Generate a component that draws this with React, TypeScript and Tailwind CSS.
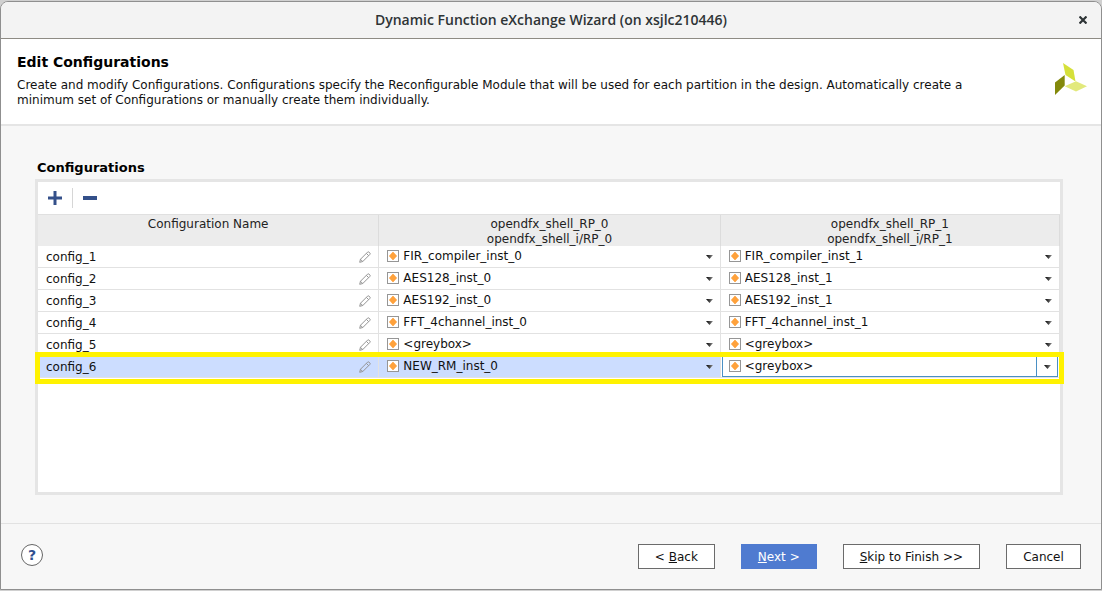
import { useState } from "react";

type Row = { name: string; modules: [string, string] };

const rows: Row[] = [
  { name: "config_1", modules: ["FIR_compiler_inst_0", "FIR_compiler_inst_1"] },
  { name: "config_2", modules: ["AES128_inst_0", "AES128_inst_1"] },
  { name: "config_3", modules: ["AES192_inst_0", "AES192_inst_1"] },
  { name: "config_4", modules: ["FFT_4channel_inst_0", "FFT_4channel_inst_1"] },
  { name: "config_5", modules: ["<greybox>", "<greybox>"] },
  { name: "config_6", modules: ["NEW_RM_inst_0", "<greybox>"] },
];

function Logo() {
  return (
    <svg width="32" height="32" viewBox="0 0 32 32" aria-hidden="true">
      <path d="M8 0 18.500 7 20.500 18.500 10.500 12Z" fill="#d5e03a" />
      <path d="M0 19.500 9.700 12V22.500L0 32Z" fill="#83890b" />
      <path d="M9.700 23.300 21 18.300 32 23.300 21 28.500Z" fill="#e2e97c" />
    </svg>
  );
}

function ModuleIcon() {
  return (
    <svg className="mb-px shrink-0" width="12" height="12" viewBox="0 0 12 12" aria-hidden="true">
      <rect x="0.5" y="0.5" width="11" height="11" fill="#fff" stroke="#969696" />
      <path d="M6 2 9.700 6 6 10 2.300 6Z" fill="#ffa23c" stroke="#ff9a30" strokeWidth="0.6" />
    </svg>
  );
}

function Pencil() {
  return (
    <svg width="12" height="12" viewBox="0 0 12 12" fill="none" stroke="#949494" aria-hidden="true">
      <path d="M0.700 11.300 1.500 8.200 8.600 1.100Q9.300 0.500 10 1.100L10.900 2Q11.500 2.700 10.900 3.400L3.800 10.500ZM7.400 2.400 9.600 4.600M1.500 8.300 3.700 10.500" />
    </svg>
  );
}

function Arrow() {
  return (
    <svg className="pointer-events-none" width="7" height="4" viewBox="0 0 7 4" aria-hidden="true">
      <defs>
        <linearGradient id="arrow">
          <stop offset="0" stopColor="#000" />
          <stop offset="1" stopColor="#8c8c8c" />
        </linearGradient>
      </defs>
      <path d="M0 0H7L3.500 4Z" fill="url(#arrow)" />
    </svg>
  );
}

function ModuleSelect({ value, label, editing }: { value: string; label: string; editing: boolean }) {
  return (
    <div
      className={
        editing
          ? "ml-px mr-px h-[21px] border border-[#4a90c4] bg-white pl-[6px] flex items-center"
          : "h-[21px] pl-2 flex items-center"
      }
    >
      <ModuleIcon />
      <select
        aria-label={label}
        defaultValue={value}
        className="h-full min-w-0 flex-1 appearance-none bg-transparent pl-[4px] outline-none"
      >
        <option>{value}</option>
      </select>
      <span
        className={
          editing
            ? "flex h-full w-[21px] items-center justify-center border-l border-[#4a90c4]"
            : "flex h-full w-[21px] items-center justify-center"
        }
      >
        <Arrow />
      </span>
    </div>
  );
}

export default function App() {
  const [selected, setSelected] = useState("config_6");
  const button = "h-[25px] min-w-[75px] border px-4 pt-[2px] leading-[15px]";
  const head = "border-r border-[#dcdcdc] p-0 align-top font-normal text-[#222]";

  return (
    <div className="min-h-screen bg-[#d0d0d0] pt-px pb-px font-['DejaVu_Sans',sans-serif] text-[12px] leading-[15px] text-[#111] flex flex-col">
      <main className="flex flex-1 flex-col overflow-hidden rounded-t-lg border border-[#8f8f8f] bg-[#f7f7f7]">
        <header className="relative flex h-[37px] items-center justify-center border-b border-[#8e8b84] bg-[#f3f3f3]">
          <h1 className="font-['Open_Sans',sans-serif] text-[14px] font-semibold leading-5 text-[#2e3436]">
            Dynamic Function eXchange Wizard (on xsjlc210446)
          </h1>
          <button aria-label="Close" className="absolute right-[14px] top-[14px]">
            <svg width="8" height="8" viewBox="0 0 8 8" stroke="#2e3436" strokeWidth="2.2" aria-hidden="true">
              <path d="M0.500 0.500 7.500 7.500M7.500 0.500 0.500 7.500" />
            </svg>
          </button>
        </header>

        <section className="flex h-[87px] items-start justify-between border-b-2 border-[#e5e5e5] bg-white pl-4 pr-[14px]">
          <div className="pt-[14px]">
            <h2 className="text-[14px] font-bold leading-[18px] text-black">Edit Configurations</h2>
            <p className="mt-[7px] max-w-[1000px]">
              Create and modify Configurations. Configurations specify the Reconfigurable Module that will be used for
              each partition in the design. Automatically create a minimum set of Configurations or manually create them
              individually.
            </p>
          </div>
          <div className="pt-6">
            <Logo />
          </div>
        </section>

        <section className="flex flex-1 flex-col pl-[34px] pr-[38px] pt-[34px] pb-[28px]">
          <h3 className="pl-[2px] pb-[4px] text-[13px] font-bold leading-[15px] text-black">Configurations</h3>
          <div className="flex-1 border-[3px] border-[#e5e5e5] bg-white">
            <div className="flex h-[33px] items-center border-b border-[#e0e0e0] pl-[10px]">
              <button aria-label="Add configuration">
                <svg width="14" height="14" viewBox="0 0 14 14" fill="#34508a" aria-hidden="true">
                  <path d="M5.500 0H8.500V5.500H14V8.500H8.500V14H5.500V8.500H0V5.500H5.500Z" />
                </svg>
              </button>
              <span className="mx-[10px] h-5 w-px bg-[#d6d6d6]" />
              <button aria-label="Remove configuration">
                <svg width="14" height="14" viewBox="0 0 14 14" fill="#34508a" aria-hidden="true">
                  <path d="M0 5H14V9H0Z" />
                </svg>
              </button>
            </div>
            <table className="w-full table-fixed border-separate border-spacing-0">
              <thead className="bg-[#ececec]">
                <tr>
                  <th className={head + " w-[33.4%]"}>
                    <div className="h-[31px] pt-[2px]">Configuration Name</div>
                  </th>
                  <th className={head + " w-[33.4%]"}>
                    <div className="h-[31px] pt-[2px]">
                      opendfx_shell_RP_0
                      <br />
                      opendfx_shell_i/RP_0
                    </div>
                  </th>
                  <th className={head}>
                    <div className="h-[31px] pt-[2px]">
                      opendfx_shell_RP_1
                      <br />
                      opendfx_shell_i/RP_1
                    </div>
                  </th>
                </tr>
              </thead>
              <tbody>
                {rows.map((row) => {
                  const active = row.name === selected;
                  return (
                    <tr
                      key={row.name}
                      onClick={() => setSelected(row.name)}
                      className={active ? "relative bg-[#ccddff]" : ""}
                    >
                      <td className="border-b border-r border-[#e2e2e2] p-0">
                        <div className="flex h-[21px] items-center pl-2 pr-[7px]">
                          <input
                            aria-label="Configuration name"
                            defaultValue={row.name}
                            className="h-full min-w-0 flex-1 bg-transparent outline-none"
                          />
                          <button aria-label={"Rename " + row.name}>
                            <Pencil />
                          </button>
                        </div>
                        {active && (
                          <div className="pointer-events-none absolute -top-1 -right-1 -bottom-[6px] -left-[3px] z-10 border-[5px] border-[#fff200]" />
                        )}
                      </td>
                      {row.modules.map((module, i) => (
                        <td
                          key={i}
                          className={
                            active && i === 1
                              ? "border-b border-r border-[#e2e2e2] bg-white p-0"
                              : "border-b border-r border-[#e2e2e2] p-0"
                          }
                        >
                          <ModuleSelect
                            value={module}
                            label={row.name + " module for RP_" + i}
                            editing={active && i === 1}
                          />
                        </td>
                      ))}
                    </tr>
                  );
                })}
              </tbody>
            </table>
          </div>
        </section>

        <footer className="flex h-[66px] items-start gap-[26px] border-t border-[#e2e2e2] px-5 pt-5">
          <button
            aria-label="Help"
            className="mr-auto h-[22px] w-[22px] rounded-full border border-[#666] bg-white text-[14px] font-bold leading-5 text-[#2f4f8f]"
          >
            ?
          </button>
          <button className={button + " border-[#6b6b6b] bg-white"}>
            &lt; <u>B</u>ack
          </button>
          <button className={button + " border-[#4f7bd0] bg-[#4f7bd0] text-white"}>
            <u>N</u>ext &gt;
          </button>
          <button className={button + " border-[#6b6b6b] bg-white"}>
            <u>S</u>kip to Finish &gt;&gt;
          </button>
          <button className={button + " border-[#6b6b6b] bg-white"}>Cancel</button>
        </footer>
      </main>
    </div>
  );
}
